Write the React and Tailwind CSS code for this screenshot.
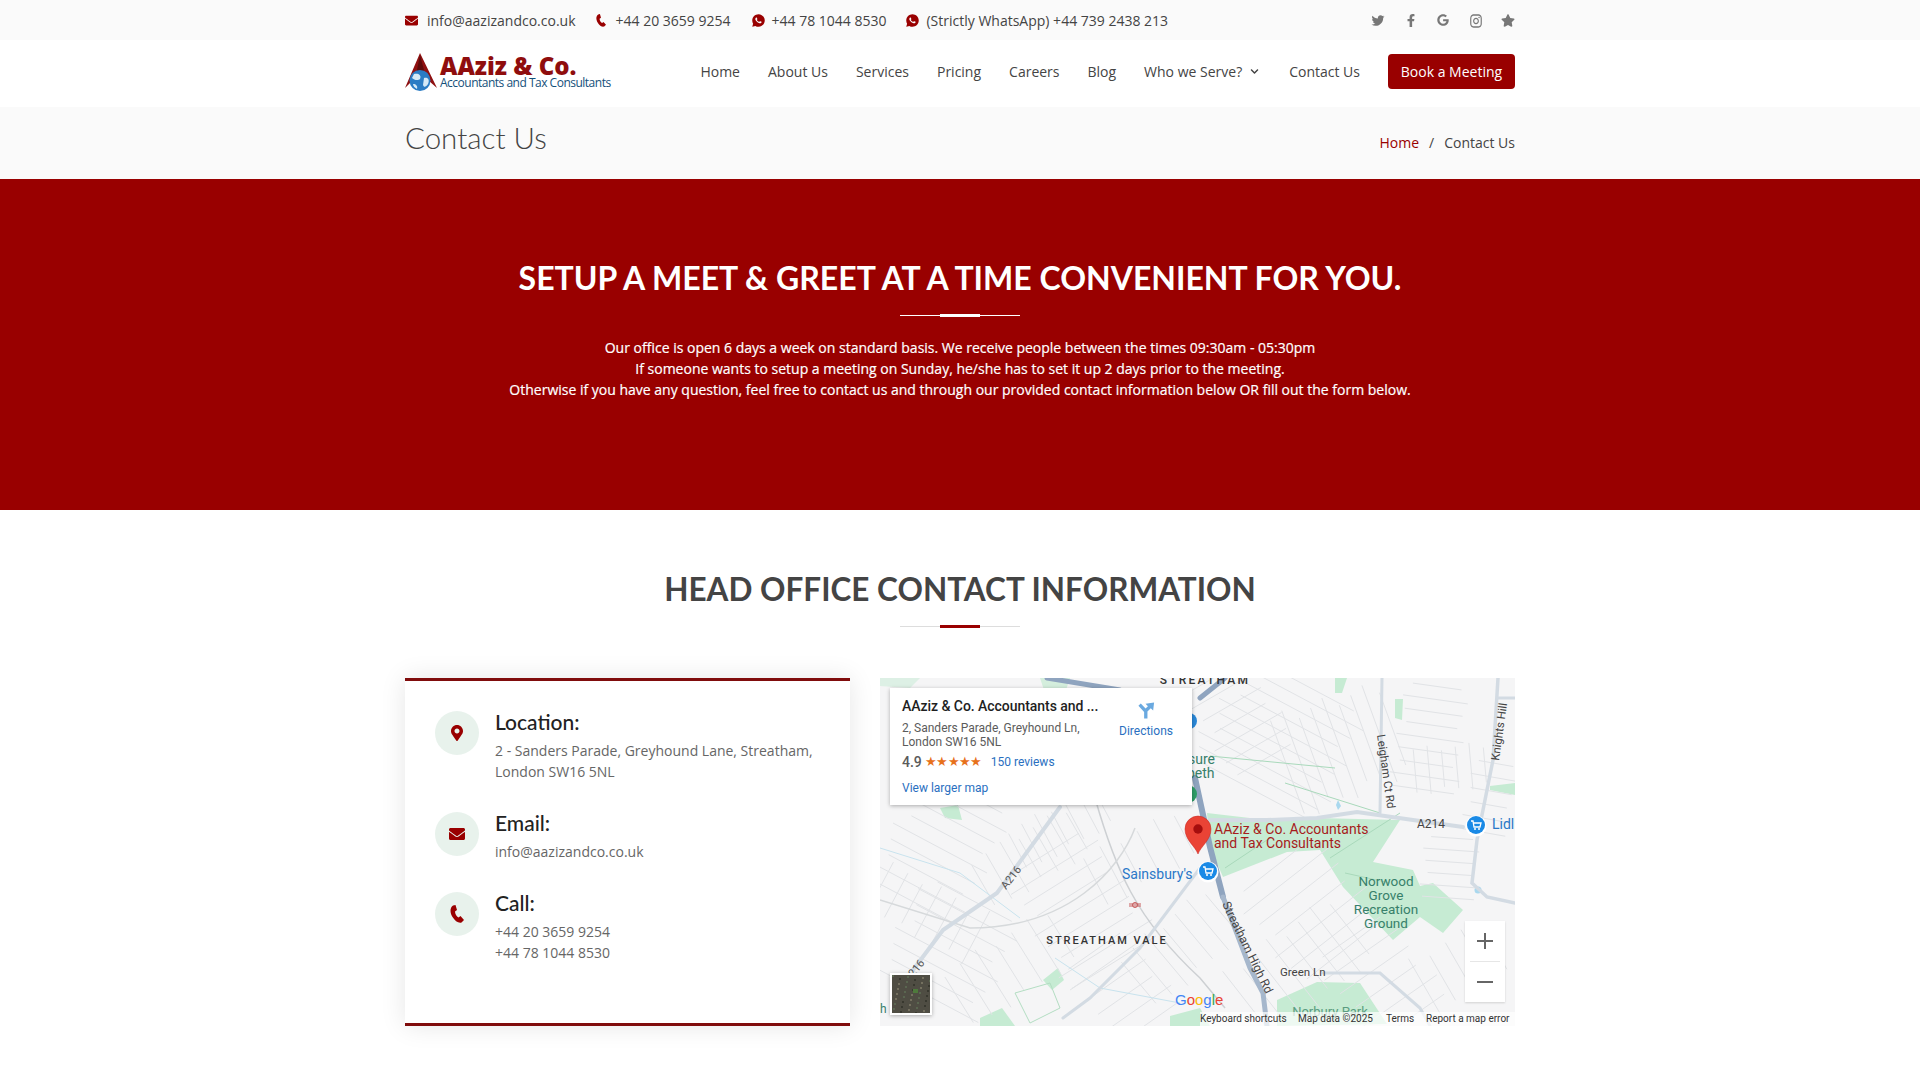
import { FaEnvelope, FaFacebookF, FaGoogle, FaMapMarkerAlt, FaStar, FaTwitter, FaChevronDown } from 'react-icons/fa';
import { RiWhatsappFill, RiInstagramLine } from 'react-icons/ri';

const navLinks = ['Home', 'About Us', 'Services', 'Pricing', 'Careers', 'Blog'];

function PhoneIcon({ className }) {
	return (
		<svg viewBox="0 0 14 18" className={className} fill="currentColor">
			<path d="M3 0.5 L5.5 0 L7 5 L5 6.5 C5 9 6.5 11.5 8.5 12.5 L10.5 11 L14 15 L11.5 17.5 C8.5 18.5 5 16 2.5 12 C0 8 -0.5 3 3 0.5 Z" />
		</svg>
	);
}

function Divider({ line, bar }) {
	return (
		<div className={`relative mx-auto h-px w-[120px] ${line}`}>
			<div className={`absolute left-10 top-[-1px] h-[3px] w-10 ${bar}`} />
		</div>
	);
}

function InfoItem({ icon, title, children }) {
	return (
		<div className="mb-[30px] flex">
			<div className="mr-4 flex h-11 w-11 shrink-0 items-center justify-center rounded-full bg-[#e8f2ec] text-[#990000]">
				{icon}
			</div>
			<div>
				<h4 className="mb-[6px] mt-[-1px] font-['Lato',sans-serif] text-[21px] font-medium leading-6 text-[#222222]">
					{title}
				</h4>
				<p className="text-sm leading-[21px] text-[#666666]">{children}</p>
			</div>
		</div>
	);
}

// bundles of side streets: centre, angle, length, how many, spacing
const streetBlocks = [
	[60, 170, 28, 110, 9, 15],
	[70, 270, 28, 120, 8, 15],
	[40, 230, -62, 60, 8, 18],
	[130, 290, 58, 70, 7, 20],
	[200, 230, -32, 110, 9, 16],
	[150, 180, 60, 60, 7, 18],
	[260, 180, 62, 60, 6, 20],
	[240, 310, -35, 90, 6, 18],
	[300, 270, 50, 70, 7, 18],
	[400, 60, 28, 150, 10, 13],
	[360, 40, -30, 80, 7, 16],
	[460, 70, 70, 110, 9, 14],
	[550, 60, 8, 70, 9, 13],
	[570, 90, 85, 50, 6, 14],
	[430, 230, -38, 120, 7, 18],
	[420, 290, 52, 90, 8, 18],
	[500, 300, -35, 100, 6, 20],
	[580, 290, 60, 70, 5, 20],
	[570, 190, 4, 60, 6, 12],
	[610, 120, 10, 50, 6, 14],
	[180, 150, 62, 50, 7, 16],
];

const streets = streetBlocks.flatMap(([cx, cy, angle, len, count, gap]) => {
	const a = (angle * Math.PI) / 180;
	const dx = Math.cos(a);
	const dy = Math.sin(a);
	return Array.from({ length: count }, (_, i) => {
		const off = (i - (count - 1) / 2) * gap;
		const mx = cx - dy * off;
		const my = cy + dx * off;
		const l = len * (0.7 + ((i * 37) % 10) / 30);
		return [mx - (dx * l) / 2, my - (dy * l) / 2, mx + (dx * l) / 2, my + (dy * l) / 2];
	});
});

function MapDrawing() {
	return (
		<svg viewBox="0 0 635 348" className="block h-full w-full font-['Roboto',sans-serif]">
			<rect width="635" height="348" fill="#f5f5f6" />
			{/* parks */}
			<g fill="#c6ebd3">
				<path d="M327 135 L387 142 L437 140 L520 142 L493 184 L533 192 L540 208 L553 205 L583 232 L563 255 L540 239 L513 262 L463 209 L440 172 L407 174 L343 199 L330 169 Z" />
				<path d="M397 322 L437 304 L480 305 L507 346 L397 348 Z" />
				<path d="M455 0 L467 0 L462 15 L455 15 Z" />
				<path d="M515 21 L523 21 L522 42 L515 40 Z" />
				<path d="M610 108 L635 105 L635 117 L610 112 Z" />
				<path d="M160 0 L190 0 L185 15 L165 15 Z" opacity="0.7" />
				<path d="M60 130 L78 127 L82 142 L65 140 Z" />
				<path d="M163 302 L178 290 L184 302 L172 312 Z" />
				<path d="M100 340 L122 330 L135 348 L100 348 Z" />
				<path d="M290 338 L320 330 L330 348 L290 348 Z" />
				<path d="M0 0 L40 0 L30 10 L0 8 Z" opacity="0.5" />
			</g>
			<g fill="#a9d8ee">
				<path d="M458 122 L461 128 L458 132 L456 127 Z" />
				<circle cx="598" cy="212" r="3.5" />
			</g>
			{/* side streets */}
			<g stroke="#e1e3e6" strokeWidth="1" fill="none">
				{streets.map(([x1, y1, x2, y2], i) => (
					<line key={i} x1={x1} y1={y1} x2={x2} y2={y2} />
				))}
			</g>
			{/* railway and streams */}
			<g fill="none" strokeWidth="1.5">
				<path d="M215 120 C235 190 255 240 320 300 L345 330" stroke="#cdd0d3" />
				<path d="M255 150 C240 190 190 250 90 250 L0 222" stroke="#d6d9db" />
				<path d="M0 170 L80 195 L140 240" stroke="#c8e3ee" strokeWidth="1" />
				<path d="M175 280 L220 310 L300 325" stroke="#c8e3ee" strokeWidth="1" />
				<path d="M330 78 L455 90 M405 105 L500 135" stroke="#a9d9bb" strokeWidth="1" />
				<path d="M135 315 L170 305 L180 330 L150 345 Z" stroke="#b3ddc2" strokeWidth="1" />
				<path d="M345 190 L390 160 M450 180 L520 135 M465 195 L510 205" stroke="#a9d9bb" strokeWidth="1" />
			</g>
			{/* main roads */}
			<g fill="none" stroke="#d3dbe3" strokeLinecap="round">
				<path d="M33 292 L63 252 L117 215 L180 129" strokeWidth="4" />
				<path d="M183 340 L210 320 L260 270 L320 190" strokeWidth="3" />
				<path d="M330 142 L387 142 L437 140 L477 134 L533 142 L583 149" strokeWidth="4" />
				<path d="M502 0 L500 135" strokeWidth="3" />
				<path d="M618 0 L613 82 L597 162 L592 205 L607 219 L635 225" strokeWidth="3.5" />
				<path d="M618 20 L635 20" strokeWidth="3" />
				<path d="M443 295 L500 295 L540 330 L550 348" strokeWidth="3" />
				<path d="M300 60 L250 100" strokeWidth="2" />
			</g>
			<g fill="none" stroke="#8fa4bf" strokeLinecap="round">
				<path d="M167 0 L240 12" strokeWidth="5" />
				<path d="M345 0 L320 20" strokeWidth="5" />
				<path d="M315 100 L330 169 L343 219" strokeWidth="6" />
				<path d="M343 219 L370 290 L383 315 L387 348" strokeWidth="5" stroke="#a6b7cc" />
			</g>
			{/* labels */}
			<text x="325" y="6" fontSize="12" letterSpacing="2.2" fill="#333" fontWeight="500" textAnchor="middle">STREATHAM</text>
			<text x="227" y="266" fontSize="11" letterSpacing="2" fill="#333" fontWeight="500" textAnchor="middle">STREATHAM VALE</text>
			<text x="0" y="0" fontSize="11" fill="#555" transform="translate(126 212) rotate(-52)">A216</text>
			<text x="0" y="0" fontSize="11" fill="#555" textAnchor="end" transform="translate(45 285) rotate(-52)">A216</text>
			<text x="0" y="0" fontSize="11.5" fill="#444" transform="translate(497 57) rotate(82)">Leigham Ct Rd</text>
			<text x="0" y="0" fontSize="11.5" fill="#444" transform="translate(619 83) rotate(-82)">Knights Hill</text>
			<text x="0" y="0" fontSize="12" fill="#444" transform="translate(342 226) rotate(64)">Streatham High Rd</text>
			<text x="537" y="150" fontSize="12" fill="#444">A214</text>
			<text x="400" y="298" fontSize="11.5" fill="#444">Green Ln</text>
			<text x="450" y="338" fontSize="13" fill="#5a9c80" textAnchor="middle">Norbury Park</text>
			<g fontSize="13.5" fill="#37806a" textAnchor="middle">
				<text x="506" y="208">Norwood</text>
				<text x="506" y="222">Grove</text>
				<text x="506" y="236">Recreation</text>
				<text x="506" y="250">Ground</text>
			</g>
			<text x="308" y="86" fontSize="14" fill="#37806a">sure</text>
			<text x="307" y="100" fontSize="14" fill="#37806a">beth</text>
			<text x="612" y="151" fontSize="14" fill="#2a78c8">Lidl</text>
			<text x="242" y="201" fontSize="14" fill="#2a78c8">Sainsbury's</text>
			<text x="334" y="156" fontSize="14" fill="#a61c1c">AAziz &amp; Co. Accountants</text>
			<text x="334" y="170" fontSize="14" fill="#a61c1c">and Tax Consultants</text>
			{/* pins */}
			<circle cx="309" cy="43" r="8" fill="#2a88d8" />
			<circle cx="308" cy="116" r="9" fill="#2f9e68" />
			<g>
				<circle cx="596" cy="148" r="10.5" fill="#fff" />
				<circle cx="596" cy="147" r="9" fill="#1a8ae6" />
				<path d="M591 143 h2 l1 6 h6 l1 -4 h-7.5" stroke="#fff" strokeWidth="1.3" fill="none" />
				<circle cx="595" cy="151" r="1" fill="#fff" />
				<circle cx="599" cy="151" r="1" fill="#fff" />
			</g>
			<g>
				<circle cx="328" cy="194" r="10.5" fill="#fff" />
				<circle cx="328" cy="193" r="9" fill="#1a8ae6" />
				<path d="M323 189 h2 l1 6 h6 l1 -4 h-7.5" stroke="#fff" strokeWidth="1.3" fill="none" />
				<circle cx="327" cy="197" r="1" fill="#fff" />
				<circle cx="331" cy="197" r="1" fill="#fff" />
			</g>
			<path d="M318 176 C315 168 305 162 305 151 A13 13 0 0 1 331 151 C331 162 321 168 318 176 Z" fill="#ea4335" stroke="#c5221f" strokeWidth="0.5" />
			<circle cx="318" cy="151" r="4.7" fill="#a50e0e" />
			<g stroke="#c65a5a" strokeWidth="1">
				<path d="M249 226 h12 M249 228 h12" />
				<circle cx="255" cy="227" r="2.5" fill="none" />
			</g>
			{/* google wordmark */}
			<text x="295" y="327" fontSize="15" fontWeight="500" className="font-['Liberation_Sans',sans-serif]">
				<tspan fill="#4285f4">G</tspan>
				<tspan fill="#ea4335">o</tspan>
				<tspan fill="#fbbc05">o</tspan>
				<tspan fill="#4285f4">g</tspan>
				<tspan fill="#34a853">l</tspan>
				<tspan fill="#ea4335">e</tspan>
			</text>
			<text x="0" y="335" fontSize="12" fill="#37806a">h</text>
		</svg>
	);
}

function SatelliteThumb() {
	const specks = Array.from({ length: 60 }, (_, i) => [(i * 17) % 38, (i * 29) % 38, i % 3]);
	return (
		<svg viewBox="0 0 38 38" className="block h-full w-full">
			<rect width="38" height="38" fill="#4f4d43" />
			{specks.map(([x, y, k], i) => (
				<rect key={i} x={x} y={y} width="2" height="2" fill={k === 0 ? '#74705f' : k === 1 ? '#38382f' : '#5a6650'} />
			))}
			<rect x="21" y="14" width="5" height="4" fill="#4e7a3c" />
		</svg>
	);
}

function MapPanel() {
	return (
		<div className="relative h-[348px] flex-1 overflow-hidden font-['Roboto',sans-serif]">
			<MapDrawing />

			<div className="absolute left-[10px] top-[10px] h-[117px] w-[302px] bg-white py-[9px] pl-3 shadow-[0_1px_4px_rgba(0,0,0,0.3)]">
				<div className="text-sm font-medium leading-[18px] tracking-[-0.05px] text-[#1f1f1f]">AAziz &amp; Co. Accountants and ...</div>
				<div className="mt-[6px] text-xs leading-[14px] text-[#5b5b5b]">
					2, Sanders Parade, Greyhound Ln,
					<br />
					London SW16 5NL
				</div>
				<div className="mt-[4px] flex items-center text-sm font-medium leading-[18px] text-[#5b5b5b]">
					4.9
					<span className="ml-[3px] text-[13px] tracking-[-0.6px] text-[#e7711b]">★★★★★</span>
					<span className="ml-[9px] text-xs font-normal text-[#2a6fbf]">150 reviews</span>
				</div>
				<div className="mt-[9px] text-xs leading-4 text-[#2a6fbf]">View larger map</div>

				<div className="absolute left-[229px] top-[13px] flex w-[54px] flex-col items-center text-xs leading-[14px] text-[#2a6fbf]">
					<svg viewBox="0 0 20 20" className="mb-1 h-[19px] w-[19px]" fill="#6aa9e0">
						<path d="M7.5 18.5 V11.5 L1.5 5 L4 2.5 L9 8 L11.5 5.5 L9 3 L18 1.5 L17 10 L14.5 7.5 L11 11 V18.5 Z" />
					</svg>
					Directions
				</div>
			</div>

			<div className="absolute left-[10px] top-[295px] h-[42px] w-[42px] border-2 border-white shadow-[0_1px_4px_rgba(0,0,0,0.3)]">
				<SatelliteThumb />
			</div>

			<div className="absolute left-[585px] top-[243px] flex h-[81px] w-10 flex-col items-center bg-white text-[#666666] shadow-[0_1px_2px_rgba(0,0,0,0.15)]">
				<svg viewBox="0 0 40 40" className="h-10 w-10" fill="currentColor">
					<path d="M19 12 h2 v7 h7 v2 h-7 v7 h-2 v-7 h-7 v-2 h7 Z" />
				</svg>
				<div className="h-px w-[30px] bg-[#e6e6e6]" />
				<svg viewBox="0 0 40 40" className="h-10 w-10" fill="currentColor">
					<path d="M12 19 h16 v2 h-16 Z" />
				</svg>
			</div>

			<div className="absolute bottom-0 left-[320px] right-0 flex h-[14px] items-center bg-white/70 text-[10px] leading-[14px] text-[#333333]">
				<span className="w-[98px]">Keyboard shortcuts</span>
				<span className="w-[88px]">Map data ©2025</span>
				<span className="w-[40px]">Terms</span>
				<span>Report a map error</span>
			</div>
		</div>
	);
}

export default function App() {
	return (
		<div className="bg-white font-['Open_Sans',sans-serif] text-sm text-[#444444]">
			{/* top bar */}
			<div className="h-10 bg-[#fafafa]">
				<div className="mx-auto flex h-full w-[1110px] items-center pt-[1px]">
					<span className="mr-[20px] flex items-center">
						<FaEnvelope className="mr-[9px] h-[13px] w-[13px] text-[#990000]" />
						info@aazizandco.co.uk
					</span>
					<span className="mr-[20px] flex items-center">
						<PhoneIcon className="mr-[10px] h-[13px] w-[10px] text-[#990000]" />
						+44 20 3659 9254
					</span>
					<span className="mr-[19px] flex items-center">
						<RiWhatsappFill className="mr-[6px] h-[15px] w-[15px] text-[#990000]" />
						+44 78 1044 8530
					</span>
					<span className="flex items-center">
						<RiWhatsappFill className="mr-[6px] h-[15px] w-[15px] text-[#990000]" />
						(Strictly WhatsApp) +44 739 2438 213
					</span>
					<div className="ml-auto flex items-center gap-[18.5px] text-[#777777]">
						<FaTwitter className="h-[13px] w-[14px]" />
						<FaFacebookF className="h-[13px] w-[14px]" />
						<FaGoogle className="mb-[2px] h-3 w-[14px]" />
						<RiInstagramLine className="h-4 w-[14px]" preserveAspectRatio="none" />
						<FaStar className="h-[13px] w-[14px]" />
					</div>
				</div>
			</div>

			{/* header */}
			<header className="h-[67px]">
				<div className="mx-auto flex h-full w-[1110px] items-center">
					<a className="flex items-start pb-[3px]">
						<svg viewBox="0 0 32 38" className="mr-[3px] h-[38px] w-8">
							<path d="M15 0 L32 35 L24 28 C20 20 11 20 7 28 L0 35 Z" fill="#8f1010" />
							<path d="M15 2 L20 21 L11 22 Z" fill="#5e0a0a" />
							<circle cx="15" cy="27.5" r="10.5" fill="#2b7cc4" />
							<path d="M9 21 C13 20 17 22 15 26 C13 28 9 27 7 25 Z M19 25 C23 24 25 27 23 31 C21 34 19 35 18 32 Z M8 31 C11 31 13 33 12 36 C10 35 8 33 8 31 Z" fill="#d5e9f6" />
						</svg>
						<div className="mt-[1px]">
							<div className="font-['Noto_Sans',sans-serif] text-[24px] font-black leading-[24px] text-[#8f0d0d]">AAziz &amp; Co.</div>
							<div className="mt-[-2px] whitespace-nowrap text-xs leading-[14px] tracking-[-0.5px] text-[#14507a]">Accountants and Tax Consultants</div>
						</div>
					</a>
					<nav className="ml-auto flex items-center pb-1">
						{navLinks.map((link) => (
							<a key={link} className="mr-7">{link}</a>
						))}
						<a className="mr-[30px] flex items-center">
							Who we Serve?
							<FaChevronDown className="ml-2 h-[9px] w-[9px]" />
						</a>
						<a className="mr-7">Contact Us</a>
						<a className="flex h-[35px] w-[127px] items-center justify-center rounded bg-[#990000] font-medium text-white">Book a Meeting</a>
					</nav>
				</div>
			</header>

			{/* breadcrumbs */}
			<div className="h-[72px] bg-[#fafafa]">
				<div className="mx-auto flex h-full w-[1110px] items-center justify-between">
					<h2 className="mb-[10px] font-['Lato',sans-serif] text-[29.5px] font-light">Contact Us</h2>
					<div className="flex items-center">
						<a className="text-[#990000]">Home</a>
						<span className="mx-[10px]">/</span>
						<span>Contact Us</span>
					</div>
				</div>
			</div>

			{/* meet and greet */}
			<section className="h-[331px] bg-[#990000] pt-[77px] text-center text-white">
				<h2 className="mb-[15px] font-['Lato',sans-serif] text-[32px] font-bold uppercase leading-[44px]">
					Setup a meet &amp; greet at a time convenient for you.
				</h2>
				<Divider line="bg-white" bar="bg-white" />
				<p className="mt-[21px] font-medium leading-[21px] [-webkit-text-stroke:0.2px_white]">
					Our office is open 6 days a week on standard basis. We receive people between the times 09:30am - 05:30pm
					<br />
					If someone wants to setup a meeting on Sunday, he/she has to set it up 2 days prior to the meeting.
					<br />
					Otherwise if you have any question, feel free to contact us and through our provided contact information below OR fill out the form below.
				</p>
			</section>

			{/* contact info */}
			<section className="pb-[54px] pt-[57px]">
				<h2 className="mb-[15px] text-center font-['Lato',sans-serif] text-[31.5px] font-bold uppercase leading-[44px] text-[#444444]">
					Head Office Contact Information
				</h2>
				<Divider line="bg-[#dddddd]" bar="bg-[#990000]" />
				<div className="mx-auto mt-[51px] flex w-[1110px] gap-[30px]">
					<div className="h-[348px] w-[445px] border-y-[3px] border-[#800c0c] bg-white px-[30px] pt-[30px] shadow-[0_0_24px_rgba(0,0,0,0.1)]">
						<InfoItem icon={<FaMapMarkerAlt className="h-4 w-4" />} title="Location:">
							2 - Sanders Parade, Greyhound Lane, Streatham, London SW16 5NL
						</InfoItem>
						<InfoItem icon={<FaEnvelope className="h-4 w-[18px]" />} title="Email:">
							info@aazizandco.co.uk
						</InfoItem>
						<InfoItem icon={<PhoneIcon className="h-[18px] w-[14px]" />} title="Call:">
							+44 20 3659 9254
							<br />
							+44 78 1044 8530
						</InfoItem>
					</div>
					<MapPanel />
				</div>
			</section>
		</div>
	);
}
